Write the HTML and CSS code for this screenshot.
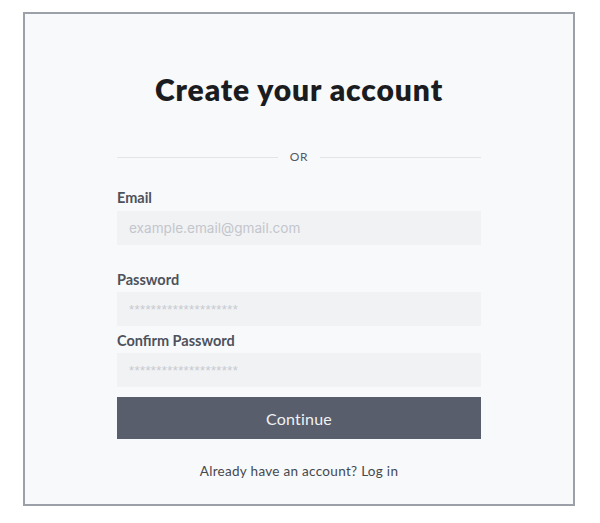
FILE: index.html
```html
<!DOCTYPE html>
<html lang="en">
<head>
<meta charset="utf-8">
<title>Create your account</title>
<link rel="stylesheet" href="styles.css">
</head>
<body>
<main class="card">
  <h1 class="title">Create your account</h1>
  <div class="divider"><span class="divider-line"></span><span class="divider-text">OR</span><span class="divider-line"></span></div>
  <form class="form">
    <label class="label label-email" for="email">Email</label>
    <input class="input" id="email" type="email" placeholder="example.email@gmail.com">
    <label class="label label-password" for="password">Password</label>
    <input class="input input-pw" id="password" type="text" placeholder="********************">
    <label class="label label-confirm" for="confirm">Confirm Password</label>
    <input class="input input-pw" id="confirm" type="text" placeholder="********************">
    <button class="button" type="button">Continue</button>
  </form>
  <p class="footer">Already have an account? Log in</p>
</main>
</body>
</html>
```
FILE: styles.css
```css
* { box-sizing: border-box; }
html, body { margin: 0; padding: 0; background: #ffffff; }
body { padding: 12px 0 0 23px; font-family: "Lato", "Liberation Sans", sans-serif; }

.card {
  width: 552px;
  height: 494px;
  border: 2px solid #9ca1a9;
  background: #f8f9fa;
  display: flex;
  flex-direction: column;
  align-items: center;
  padding-top: 58px;
}

.title {
  margin: 0;
  font-family: "Lato", sans-serif;
  font-weight: 800;
  font-size: 30px;
  line-height: 34px;
  color: #1b1c1f;
  letter-spacing: 0.9px;
}

.divider {
  margin-top: 44px;
  width: 364px;
  height: 14px;
  display: flex;
  align-items: center;
  gap: 12px;
}
.divider-line { flex: 1; height: 1px; background: #e2e4e8; }
.divider-text { font-size: 12px; line-height: 14px; color: #555a62; letter-spacing: 0.6px; }

.form {
  width: 364px;
  display: flex;
  flex-direction: column;
  margin-top: 25px;
}

.label {
  font-size: 14.5px;
  line-height: 17px;
  font-weight: 700;
  color: #4d525c;
  margin-bottom: 5px;
}
.label-password { margin-top: 26px; margin-bottom: 4px; }
.label-confirm { margin-top: 6px; margin-bottom: 4px; }

.input {
  height: 34px;
  border: none;
  outline: none;
  background: #f1f2f4;
  padding: 0 12px;
  font-family: "Inter", "Lato", sans-serif;
  font-size: 13.6px;
  color: #333;
}
.input::placeholder { color: #c3c6cc; }
.input-pw { font-family: "Liberation Sans", sans-serif; }
.input-pw::placeholder { font-size: 13px; letter-spacing: 0.4px; color: #c7cad0; }

.button {
  margin-top: 10px;
  height: 42px;
  border: none;
  background: #585e6b;
  color: #f1f2f4;
  font-family: "Lato", sans-serif;
  font-size: 16px;
  letter-spacing: 0.2px;
}

.footer {
  margin: 24px 0 0;
  font-size: 13.5px;
  line-height: 16px;
  color: #45484e;
  letter-spacing: 0.3px;
}
```
